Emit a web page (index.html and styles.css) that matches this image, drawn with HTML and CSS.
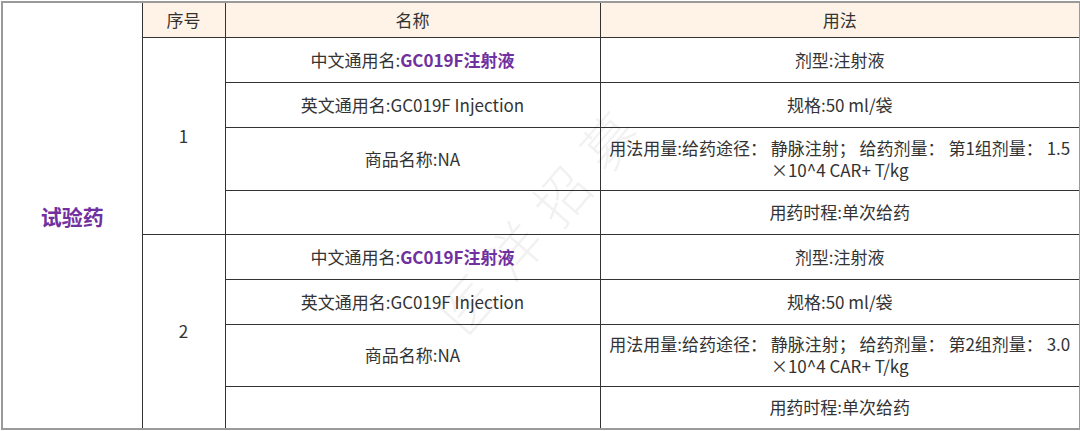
FILE: index.html
```html
<!DOCTYPE html>
<html lang="zh">
<head>
<meta charset="utf-8">
<link rel="stylesheet" href="styles.css">
</head>
<body>
<div class="wrap">
<table class="drug">
  <colgroup>
    <col class="c1"><col class="c2"><col class="c3"><col class="c4">
  </colgroup>
  <tr class="h">
    <td class="group" rowspan="9">试验药</td>
    <th>序号</th><th>名称</th><th>用法</th>
  </tr>
  <tr class="r45">
    <td class="num" rowspan="4">1</td>
    <td>中文通用名:<span class="hl">GC019F注射液</span></td>
    <td>剂型:注射液</td>
  </tr>
  <tr class="r45">
    <td>英文通用名:GC019F Injection</td>
    <td>规格:50 ml/袋</td>
  </tr>
  <tr class="r63">
    <td>商品名称:NA</td>
    <td class="wide"><span class="line">用法用量:给药途径： 静脉注射； 给药剂量： 第1组剂量： 1.5</span><br>×10^4 CAR+ T/kg</td>
  </tr>
  <tr class="r44">
    <td></td>
    <td>用药时程:单次给药</td>
  </tr>
  <tr class="r45">
    <td class="num" rowspan="4">2</td>
    <td>中文通用名:<span class="hl">GC019F注射液</span></td>
    <td>剂型:注射液</td>
  </tr>
  <tr class="r45">
    <td>英文通用名:GC019F Injection</td>
    <td>规格:50 ml/袋</td>
  </tr>
  <tr class="r62">
    <td>商品名称:NA</td>
    <td class="wide"><span class="line">用法用量:给药途径： 静脉注射； 给药剂量： 第2组剂量： 3.0</span><br>×10^4 CAR+ T/kg</td>
  </tr>
  <tr class="r43">
    <td></td>
    <td>用药时程:单次给药</td>
  </tr>
</table>
<div class="watermark">医洋招募</div>
</div>
</body>
</html>
```

FILE: styles.css
```css
html, body {
  margin: 0;
  padding: 0;
  background: #ffffff;
}
body {
  font-family: "Noto Sans CJK SC", "Noto Sans", sans-serif;
  color: #333333;
}
.wrap {
  position: relative;
  padding: 1px 0 0 1px;
  width: 1079px;
  overflow: hidden;
}
.drug {
  border-collapse: collapse;
  table-layout: fixed;
  width: 1078px;
  border: 2px solid #9a9a9a;
  font-size: 17px;
  line-height: 22px;
}
.c1 { width: 140px; }
.c2 { width: 83px; }
.c3 { width: 375px; }
.c4 { width: 480px; }
.drug th, .drug td {
  border: 1px solid #333333;
  text-align: center;
  vertical-align: middle;
  padding: 0 4px;
  font-weight: normal;
}
.drug th {
  background: #fef3e6;
}
.drug .group {
  color: #7030a0;
  font-weight: bold;
  font-size: 21px;
  background: #ffffff;
}
.hl {
  color: #7030a0;
  font-weight: bold;
}
.drug .wide {
  padding: 0 2px;
}
.line {
  white-space: nowrap;
}
.h { height: 35px; }
.r45 { height: 45px; }
.r44 { height: 44px; }
.r43 { height: 43px; }
.r63 { height: 63px; }
.r62 { height: 62px; }
.watermark {
  position: absolute;
  left: 398px;
  top: 175px;
  font-size: 54px;
  letter-spacing: 18px;
  font-weight: 300;
  color: rgba(0, 0, 0, 0.055);
  transform: rotate(-49deg);
  white-space: nowrap;
  pointer-events: none;
}
```
